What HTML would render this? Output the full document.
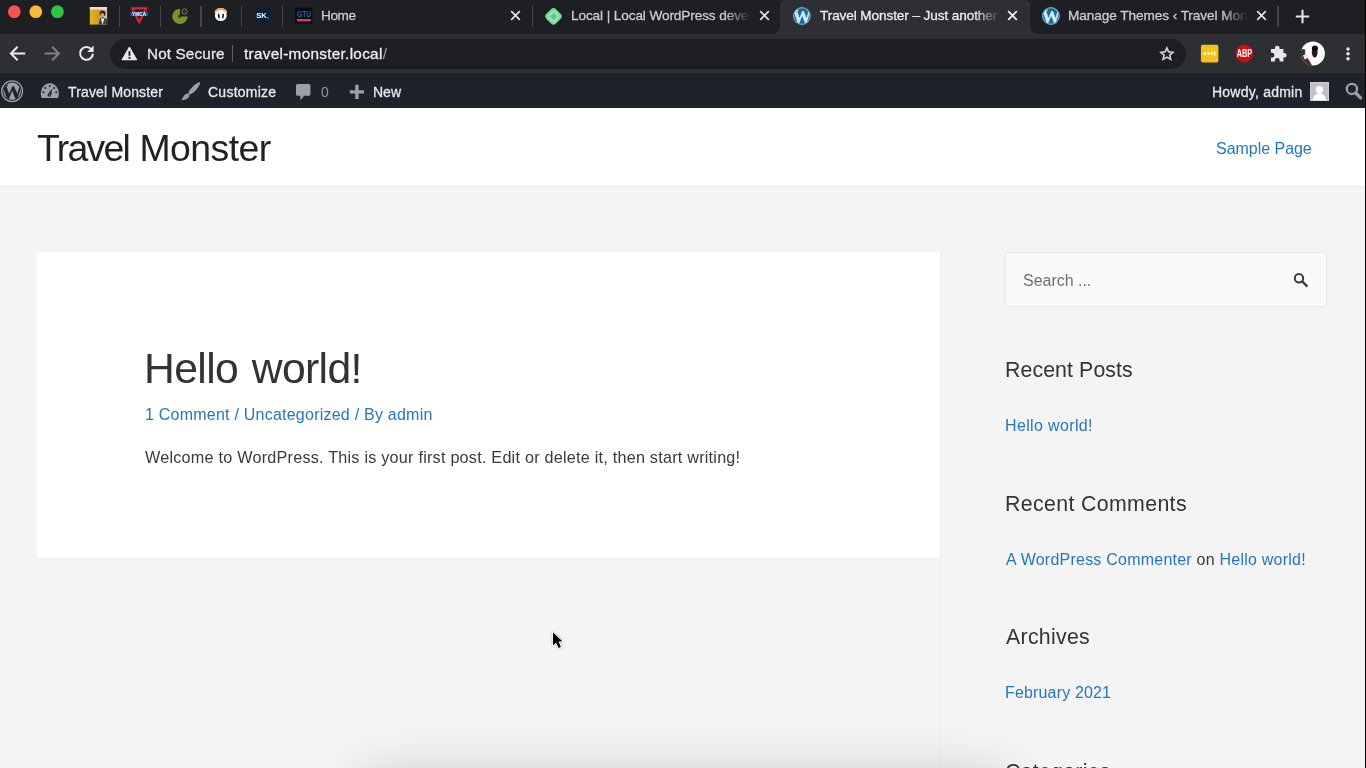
<!DOCTYPE html>
<html lang="en">
<head>
<meta charset="utf-8">
<title>Travel Monster – Just another WordPress site</title>
<style>
*{box-sizing:border-box;margin:0;padding:0}
html,body{width:1366px;height:768px;overflow:hidden;background:#f4f4f4}
body{font-family:"Liberation Sans",Arial,sans-serif;color:#3a3a3a;position:relative;-webkit-font-smoothing:antialiased}
a{text-decoration:none;color:#2477be}
.abs{position:absolute;white-space:nowrap}
/* promote text to its own layer so it is rendered with grayscale antialiasing */
.abs,.tabtxt,.t,.wt,.wl,#sitetitle,#menu1,#posttitle,#meta,#excerpt,#searchph{will-change:transform}

/* ---------- browser chrome ---------- */
#tabstrip{position:absolute;left:0;top:0;width:1366px;height:34px;background:#1e1f22}
#toolbar{position:absolute;left:0;top:34px;width:1366px;height:39px;background:#2e2f33}
#omnibox{position:absolute;left:110px;top:4.5px;width:1076px;height:30px;border-radius:15px;background:#1d1e21}
.tabtxt{position:absolute;top:6.5px;font-size:13.6px;line-height:17px;color:#c9ccd1;white-space:nowrap;overflow:hidden;-webkit-text-stroke:.3px #c9ccd1;-webkit-mask-image:linear-gradient(to right,#000 calc(100% - 26px),transparent 100%);mask-image:linear-gradient(to right,#000 calc(100% - 26px),transparent 100%)}
.tsep{position:absolute;top:5.7px;width:1.3px;height:21.3px;background:#444649}
.tclose{position:absolute;top:10px;width:11px;height:11px}
#activetab{position:absolute;left:780px;top:0;width:249.5px;height:34px;background:#2e2f33;border-radius:5px 5px 0 0}
#activetab:before,#activetab:after{content:"";position:absolute;bottom:0;width:8px;height:8px}
#activetab:before{left:-8px;background:radial-gradient(circle at 0 0,rgba(0,0,0,0) 7.5px,#2e2f33 8.2px)}
#activetab:after{right:-8px;background:radial-gradient(circle at 100% 0,rgba(0,0,0,0) 7.5px,#2e2f33 8.2px)}

/* ---------- wp admin bar ---------- */
#wpadminbar{position:absolute;left:0;top:73px;width:1366px;height:35px;background:#1e222a;color:#f0f0f1;font-size:14px}
#wpadminbar .t{position:absolute;top:11px;line-height:17px;white-space:nowrap;color:#e6e8eb;-webkit-text-stroke:.3px #e6e8eb}

/* ---------- site ---------- */
#masthead{position:absolute;left:0;top:108px;width:1366px;height:79px;background:#fff;border-bottom:1px solid #e9e9e9}
#sitetitle{position:absolute;left:37.3px;top:126px;letter-spacing:-1px;font-size:37.4px;line-height:44px;color:#222;white-space:nowrap}
#menu1{position:absolute;left:1215.6px;top:138.7px;letter-spacing:-.03px;font-size:16px;line-height:20px;white-space:nowrap}
#article{position:absolute;left:37px;top:252px;width:903px;height:305px;background:#fff}
#sideline{position:absolute;left:940px;top:251px;width:1px;height:517px;background:#ececec}
#posttitle{position:absolute;left:143.6px;top:343px;letter-spacing:-.64px;word-spacing:2.4px;font-size:42.7px;line-height:50px;color:#333;white-space:nowrap}
#meta{position:absolute;left:144.6px;top:405px;letter-spacing:.23px;font-size:16px;line-height:20px;white-space:nowrap;color:#2477be}
#excerpt{position:absolute;left:145px;top:447px;letter-spacing:.23px;font-size:16.2px;line-height:20px;white-space:nowrap;color:#3a3a3a}
#searchbox{position:absolute;left:1005px;top:252px;width:322px;height:55px;background:#fafafa;border:1px solid #e8e8e8;border-radius:2px}
#searchph{position:absolute;left:1022.6px;top:270.7px;letter-spacing:-.02px;font-size:16px;line-height:20px;color:#6f6f6f;white-space:nowrap}
.wt{position:absolute;left:1005px;font-size:21.3px;line-height:26px;color:#333;white-space:nowrap}
#dockshadow{position:absolute;left:372px;top:786px;width:624px;height:40px;border-radius:10px;box-shadow:0 0 48px 14px rgba(0,0,0,.17)}
.wl{position:absolute;left:1005px;font-size:16px;line-height:20px;white-space:nowrap}
</style>
</head>
<body>

<!-- ======= Chrome tab strip ======= -->
<div id="tabstrip">
  <div id="activetab"></div>

  <!-- traffic lights -->
  <svg class="abs" style="left:0;top:0" width="80" height="34" viewBox="0 0 80 34">
    <circle cx="14.3" cy="11.7" r="6.4" fill="#f4564e"/>
    <circle cx="35.8" cy="11.7" r="6.4" fill="#f7b93a"/>
    <circle cx="57.4" cy="11.7" r="6.4" fill="#2fc543"/>
  </svg>
  <!-- pinned tab favicons -->
  <svg class="abs" id="fav1" style="left:89px;top:6px" width="20" height="20" viewBox="0 0 20 20">
    <defs>
      <linearGradient id="gold" x1="0" y1="0" x2="1" y2="0"><stop offset="0" stop-color="#e3b62c"/><stop offset=".55" stop-color="#d19a17"/><stop offset="1" stop-color="#c9a24a"/></linearGradient>
      <clipPath id="f1c"><rect x=".6" y="1" width="17.6" height="17.8"/></clipPath>
    </defs>
    <g clip-path="url(#f1c)">
      <rect x=".6" y="1" width="17.6" height="17.8" fill="url(#gold)"/>
      <rect x=".6" y="1" width="17.6" height="2.6" fill="#f1dcd6"/>
      <rect x="11.4" y="3.6" width="7" height="15.4" fill="#d9c58e"/>
      <ellipse cx="13.6" cy="7.6" rx="2.9" ry="3" fill="#2a2320"/>
      <ellipse cx="13.3" cy="9" rx="1.9" ry="2.1" fill="#c99f86"/>
      <path d="M9.6 19 L11 12.2 L13.4 11.2 L18.4 13 L18.4 19 Z" fill="#39435a"/>
      <path d="M12 12.4 L13.6 18.8 L15.3 12.6 Z" fill="#f4f4f6"/>
    </g>
  </svg>
  <svg class="abs" id="fav2" style="left:129px;top:6px" width="21" height="20" viewBox="0 0 21 20">
    <path d="M1.4 1.3 H19 L10.2 18.4 Z M5 3.5 L10.2 13.6 L15.4 3.5 Z" fill="#df252d" fill-rule="evenodd"/>
    <rect x="1.4" y="5.75" width="17.6" height="4.3" fill="#2c4fa3"/>
    <text x="10.2" y="9.5" font-family="Liberation Sans, sans-serif" font-weight="700" font-size="4.6" text-anchor="middle" fill="#fff" letter-spacing=".2">YMCA</text>
  </svg>
  <svg class="abs" id="fav3" style="left:170px;top:6px" width="20" height="20" viewBox="0 0 20 20">
    <path d="M9.9 10.4 L9.9 2.7 A7.7 7.7 0 1 0 17.6 10.4 Z" fill="#7a9228"/>
    <circle cx="9.6" cy="10.4" r="1.3" fill="#22261a"/>
    <path d="M9.8 10.2 L13.6 6.6" stroke="#22261a" stroke-width=".9"/>
    <circle cx="14.6" cy="5.5" r="2.6" fill="#1e1f22" stroke="#7f8c58" stroke-width="1"/>
    <circle cx="14.6" cy="5.5" r=".8" fill="#3c4420"/>
  </svg>
  <svg class="abs" id="fav4" style="left:211px;top:6px" width="20" height="20" viewBox="0 0 20 20">
    <defs><clipPath id="pc"><circle cx="9.8" cy="9.6" r="7.9"/></clipPath></defs>
    <g clip-path="url(#pc)">
      <rect x="0" y="0" width="20" height="20" fill="#0e262a"/>
      <rect x="0" y="0" width="20" height="8" fill="#1a1312"/>
      <ellipse cx="9.8" cy="6" rx="6.4" ry="4.6" fill="#f0a878"/>
      <ellipse cx="9.8" cy="9.6" rx="5.9" ry="5.5" fill="#fbfbfb"/>
      <ellipse cx="7.8" cy="10" rx=".9" ry="2.6" fill="#1b1b1b" transform="rotate(-8 7.8 10)"/>
      <ellipse cx="12" cy="10" rx=".9" ry="2.6" fill="#1b1b1b" transform="rotate(8 12 10)"/>
    </g>
  </svg>
  <svg class="abs" id="fav5" style="left:252px;top:6px" width="20" height="20" viewBox="0 0 20 20">
    <circle cx="10.1" cy="9.3" r="8.7" fill="#0a2036"/>
    <text x="9.4" y="12.3" font-family="Liberation Sans, sans-serif" font-weight="700" font-size="7.6" text-anchor="middle" fill="#f5f7f8" letter-spacing="-.2">SK</text>
    <circle cx="15.9" cy="11.8" r=".9" fill="#1fb56a"/>
  </svg>
  <svg class="abs" id="fav6" style="left:294px;top:6px" width="20" height="20" viewBox="0 0 20 20">
    <rect x="1.3" y="1.5" width="17" height="16.2" fill="#0b0b0d"/>
    <text x="2.9" y="11.3" font-family="Liberation Sans, sans-serif" font-weight="700" font-size="8.6" textLength="14.2" lengthAdjust="spacingAndGlyphs" fill="#2d62ad">GTU</text>
    <rect x="3" y="13" width="13.8" height="2.4" fill="#e2356f"/>
  </svg>
  <!-- Local favicon -->
  <svg class="abs" id="fav7" style="left:543px;top:5.8px" width="21" height="21" viewBox="0 0 21 21">
    <rect x="3.7" y="3.6" width="13.6" height="13.6" rx="3.6" fill="#7cd99e" transform="rotate(45 10.5 10.4) scale(1 1)"/>
    <rect x="6.6" y="6.5" width="7.8" height="7.8" rx="1.4" fill="none" stroke="#a4ecc0" stroke-width="1.3" transform="rotate(45 10.5 10.4)"/>
    <rect x="8.2" y="8.1" width="4.6" height="4.6" fill="#5bc789" transform="rotate(45 10.5 10.4)"/>
  </svg>
  <!-- WordPress favicons -->
  <svg class="abs wpf" id="fav8" style="left:792px;top:6px" width="20" height="20" viewBox="0 0 20 20">
    <defs><clipPath id="wpc1"><circle cx="9.9" cy="10" r="7.9"/></clipPath></defs>
    <circle cx="9.9" cy="10" r="8.9" fill="#6aaed5"/>
    <circle cx="9.9" cy="10" r="7.7" fill="#1d6a94"/>
    <g clip-path="url(#wpc1)"><text x="9.9" y="16.6" font-family="Liberation Serif, serif" font-weight="700" font-size="19" text-anchor="middle" fill="#cfe9f8" stroke="#cfe9f8" stroke-width=".35">W</text></g>
  </svg>
  <svg class="abs wpf" id="fav9" style="left:1040.5px;top:6px" width="20" height="20" viewBox="0 0 20 20">
    <defs><clipPath id="wpc2"><circle cx="9.9" cy="10" r="7.9"/></clipPath></defs>
    <circle cx="9.9" cy="10" r="8.9" fill="#6aaed5"/>
    <circle cx="9.9" cy="10" r="7.7" fill="#1d6a94"/>
    <g clip-path="url(#wpc2)"><text x="9.9" y="16.6" font-family="Liberation Serif, serif" font-weight="700" font-size="19" text-anchor="middle" fill="#cfe9f8" stroke="#cfe9f8" stroke-width=".35">W</text></g>
  </svg>
  <!-- separators -->
  <div class="tsep" style="left:118.7px"></div><div class="tsep" style="left:159.5px"></div><div class="tsep" style="left:200.3px"></div>
  <div class="tsep" style="left:241.1px"></div><div class="tsep" style="left:282px"></div><div class="tsep" style="left:532px"></div><div class="tsep" style="left:1277.3px"></div>
  <!-- close buttons -->
  <svg class="tclose" style="left:510px" viewBox="0 0 11 11"><path d="M1.2 1.2 L9.8 9.8 M9.8 1.2 L1.2 9.8" stroke="#dfe1e5" stroke-width="1.7"/></svg>
  <svg class="tclose" style="left:758.5px" viewBox="0 0 11 11"><path d="M1.2 1.2 L9.8 9.8 M9.8 1.2 L1.2 9.8" stroke="#dfe1e5" stroke-width="1.7"/></svg>
  <svg class="tclose" style="left:1007.2px" viewBox="0 0 11 11"><path d="M1.2 1.2 L9.8 9.8 M9.8 1.2 L1.2 9.8" stroke="#f1f3f4" stroke-width="1.7"/></svg>
  <svg class="tclose" style="left:1255.5px" viewBox="0 0 11 11"><path d="M1.2 1.2 L9.8 9.8 M9.8 1.2 L1.2 9.8" stroke="#dfe1e5" stroke-width="1.7"/></svg>
  <!-- new tab -->
  <svg class="abs" style="left:1294.5px;top:8.5px" width="15" height="15" viewBox="0 0 15 15"><path d="M7.5 .8 V14.2 M.8 7.5 H14.2" stroke="#e3e5e8" stroke-width="2.1"/></svg>
  <div class="tabtxt" id="tab1" style="left:321px;letter-spacing:-.4px;width:180px">Home</div>
  <div class="tabtxt" id="tab2" style="left:571px;letter-spacing:-.1px;width:180px">Local | Local WordPress development</div>
  <div class="tabtxt" id="tab3" style="left:820px;letter-spacing:-.1px;width:180px;color:#eceef1;-webkit-text-stroke-color:#eceef1">Travel Monster – Just another WordPress site</div>
  <div class="tabtxt" id="tab4" style="left:1068px;letter-spacing:-.06px;width:180px">Manage Themes ‹ Travel Monster — WordPress</div>
</div>

<!-- ======= Chrome toolbar ======= -->
<div id="toolbar">
  <div id="omnibox"></div>

  <!-- back / forward / reload -->
  <svg class="abs" style="left:8px;top:10px" width="20" height="20" viewBox="0 0 20 20"><path d="M17.2 9.5 H3.6 M9.6 2.8 L2.9 9.5 L9.6 16.2" fill="none" stroke="#e8eaed" stroke-width="2"/></svg>
  <svg class="abs" style="left:42px;top:10px" width="20" height="20" viewBox="0 0 20 20"><path d="M2.6 9.5 H16.2 M10.2 2.8 L16.9 9.5 L10.2 16.2" fill="none" stroke="#7d8085" stroke-width="2"/></svg>
  <svg class="abs" style="left:76px;top:9px" width="22" height="22" viewBox="0 0 22 22"><path d="M15.3 6.1 A6.4 6.4 0 1 0 16.9 10.6" fill="none" stroke="#e8eaed" stroke-width="2.1"/><path d="M17.6 2.6 V9 H11.2 Z" fill="#e8eaed"/></svg>
  <!-- not-secure warning -->
  <svg class="abs" style="left:120px;top:11px" width="19" height="17" viewBox="0 0 19 17"><path d="M9.4 2.4 L16.6 14.7 H2.2 Z" fill="#e8eaed" stroke="#e8eaed" stroke-width="1.2" stroke-linejoin="round"/><rect x="8.5" y="6.2" width="1.9" height="4.6" fill="#1d1e21"/><rect x="8.5" y="11.9" width="1.9" height="1.9" fill="#1d1e21"/></svg>
  <div class="abs" style="left:231.8px;top:11px;width:1.2px;height:17px;background:#5c5f64"></div>
  <!-- bookmark star -->
  <svg class="abs" style="left:1158.8px;top:11.6px" width="15.6" height="15.6" viewBox="0 0 19 19"><path d="M9.6 2.3 L11.75 7.15 L17 7.65 L13.05 11.15 L14.2 16.3 L9.6 13.6 L5 16.3 L6.15 11.15 L2.2 7.65 L7.45 7.15 Z" fill="none" stroke="#cfd2d6" stroke-width="2" stroke-linejoin="miter"/></svg>
  <!-- extensions -->
  <svg class="abs" style="left:1200px;top:10px" width="20" height="19" viewBox="0 0 20 19">
    <rect x=".9" y=".7" width="17.5" height="17.8" rx="2" fill="#f3c31d"/>
    <circle cx="4.7" cy="9.6" r="1.25" fill="#fff"/><circle cx="8.3" cy="9.6" r="1.25" fill="#fff"/><circle cx="11.9" cy="9.6" r="1.25" fill="#fff"/><rect x="14.2" y="7.4" width="1.1" height="4.4" fill="#fff"/>
  </svg>
  <svg class="abs" style="left:1234px;top:9px" width="21" height="21" viewBox="0 0 21 21">
    <circle cx="10.4" cy="10.5" r="8.9" fill="#c90f12"/>
    <text x="2.7" y="14.2" font-family="Liberation Sans, sans-serif" font-weight="700" font-size="10.4" textLength="15.4" lengthAdjust="spacingAndGlyphs" fill="#fff">ABP</text>
  </svg>
  <svg class="abs" id="puzzle" style="left:1269px;top:10px" width="19" height="19" viewBox="0 0 19 19">
    <path d="M2 5 H5.9 V4 A2.35 2.35 0 0 1 10.6 4 V5 H14.4 V8.9 H15.3 A2.3 2.3 0 0 1 15.3 13.5 H14.4 V17.4 H10.7 V16.3 A2.4 2.4 0 0 0 5.9 16.3 V17.4 H2 V13.6 H3 A2.4 2.4 0 0 0 3 8.8 H2 Z" fill="#e6e8eb"/>
  </svg>
  <svg class="abs" id="avatar" style="left:1300px;top:7px" width="26" height="26" viewBox="0 0 26 26">
    <defs><clipPath id="avc"><circle cx="12.9" cy="12.6" r="12"/></clipPath></defs>
    <g clip-path="url(#avc)">
      <rect width="26" height="26" fill="#fdfbfc"/>
      <path d="M0 8 L3.6 8.2 L5.4 13 L9.2 19.5 L13 26 L0 26 Z" fill="#4a2d33"/>
      <path d="M.4 8.6 H5.2 V11.8 H.4 Z" fill="#2c3346"/>
      <path d="M3 14.2 L6.4 13 L8 17 L4.6 18.6 Z" fill="#e9e6ea"/>
      <ellipse cx="14.7" cy="10.9" rx="2.9" ry="5.7" fill="#2b1a1d"/>
      <ellipse cx="14.9" cy="7.2" rx="3" ry="2.7" fill="#0d0c10"/>
    </g>
  </svg>
  <svg class="abs" style="left:1344px;top:11px" width="8" height="18" viewBox="0 0 8 18"><circle cx="4" cy="3.9" r="1.75" fill="#e6e8eb"/><circle cx="4" cy="8.8" r="1.75" fill="#e6e8eb"/><circle cx="4" cy="13.7" r="1.75" fill="#e6e8eb"/></svg>
  <div class="abs" id="notsecure" style="left:146.7px;top:10.5px;letter-spacing:.12px;font-size:15.3px;line-height:18px;color:#e4e6e9;-webkit-text-stroke:.3px #e4e6e9">Not Secure</div>
  <div class="abs" id="url" style="left:243.5px;top:10.5px;letter-spacing:.3px;font-size:15.3px;line-height:18px;color:#eceef1;-webkit-text-stroke:.3px #eceef1">travel-monster.local<span style="color:#9aa0a6;-webkit-text-stroke:0">/</span></div>
</div>

<!-- ======= WP admin bar ======= -->
<div id="wpadminbar">

  <!-- WP logo -->
  <svg class="abs" id="wplogo" style="left:0;top:6px" width="25" height="25" viewBox="0 0 25 25">
    <defs><clipPath id="wpc3"><circle cx="12.1" cy="12.2" r="8.7"/></clipPath></defs>
    <circle cx="12.1" cy="12.2" r="10.4" fill="none" stroke="#9ba1a8" stroke-width="1.3"/>
    <circle cx="12.1" cy="12.2" r="8.7" fill="#9ba1a8"/>
    <g clip-path="url(#wpc3)"><text x="12.1" y="19.8" font-family="Liberation Serif, serif" font-weight="700" font-size="22" text-anchor="middle" fill="#1e222a" stroke="#1e222a" stroke-width=".3">W</text></g>
  </svg>
  <!-- dashboard gauge -->
  <svg class="abs" id="dash" style="left:40px;top:9px" width="20" height="17" viewBox="0 0 20 17">
    <path d="M1.7 15.9 A9 10.2 0 1 1 17.9 15.9 Z" fill="#9ba1a8"/>
    <circle cx="3.3" cy="10.3" r="1" fill="#1e222a"/><circle cx="5.4" cy="6.1" r="1" fill="#1e222a"/><circle cx="9.8" cy="4" r="1" fill="#1e222a"/><circle cx="14.1" cy="6.1" r="1" fill="#1e222a"/><circle cx="16.2" cy="10.3" r="1" fill="#1e222a"/>
    <path d="M12.3 6.6 L11.2 13 A1.7 1.7 0 1 1 8.2 11.8 Z" fill="#1e222a"/>
    <circle cx="9.7" cy="12.9" r=".7" fill="#9ba1a8"/>
  </svg>
  <!-- customize brush -->
  <svg class="abs" id="brush" style="left:180px;top:8px" width="22" height="21" viewBox="0 0 22 21">
    <path d="M19.6 1.3 C20.6 1.5 20.1 3.2 18.6 5.6 C16.6 8.8 13.4 12.2 10.6 13.3 C9 13.6 8.2 12.4 8.6 11.2 C9.8 8.2 16.6 1.2 19.6 1.3 Z" fill="#9ba1a8"/>
    <path d="M7.6 12.6 C8.8 12.8 9.6 13.8 9.4 14.8 C8.8 17.4 5 19.4 1.2 19.2 C3.2 17.6 3.6 13 7.6 12.6 Z" fill="#9ba1a8"/>
  </svg>
  <!-- comments -->
  <svg class="abs" id="bubble" style="left:295px;top:10px" width="17" height="18" viewBox="0 0 17 18">
    <path d="M2.6 .9 H13.8 A1.6 1.6 0 0 1 15.4 2.5 V11.2 A1.6 1.6 0 0 1 13.8 12.8 H9.2 L5.4 17.2 V12.8 H2.6 A1.6 1.6 0 0 1 1 11.2 V2.5 A1.6 1.6 0 0 1 2.6 .9 Z" fill="#9ba1a8"/>
  </svg>
  <!-- new (+) -->
  <svg class="abs" id="abplus" style="left:349px;top:11px" width="16" height="16" viewBox="0 0 16 16"><path d="M7.9 .8 V15 M.8 7.9 H15" stroke="#9ba1a8" stroke-width="3.4"/></svg>
  <!-- user avatar (mystery person) -->
  <svg class="abs" id="mm" style="left:1310px;top:8.8px" width="19" height="19" viewBox="0 0 19 19">
    <defs><clipPath id="mmc"><rect x=".6" y=".6" width="17.8" height="17.8"/></clipPath></defs>
    <rect x="0" y="0" width="19" height="19" fill="#cfd0d2"/>
    <rect x=".9" y=".9" width="17.2" height="17.2" fill="#bfc0c3"/>
    <g clip-path="url(#mmc)"><circle cx="9.4" cy="7.6" r="3.7" fill="#fff"/><path d="M2.4 18.5 C3.4 13.2 6.4 11.3 9.4 11.3 C12.4 11.3 15.4 13.2 16.4 18.5 Z" fill="#fff"/></g>
  </svg>
  <!-- search -->
  <svg class="abs" id="absearch" style="left:1343px;top:8px" width="20" height="20" viewBox="0 0 20 20"><circle cx="8.9" cy="7.9" r="5.1" fill="none" stroke="#9ba1a8" stroke-width="2.3"/><path d="M12.7 12 L17.6 16.8" stroke="#9ba1a8" stroke-width="3.2" stroke-linecap="round"/></svg>
  <div class="t" id="ab1" style="left:68px;letter-spacing:.16px">Travel Monster</div>
  <div class="t" id="ab2" style="left:207.5px;letter-spacing:.25px">Customize</div>
  <div class="t" id="ab3" style="left:321px;color:#8f949b;-webkit-text-stroke:0">0</div>
  <div class="t" id="ab4" style="left:372.8px">New</div>
  <div class="t" id="ab5" style="left:1212px;letter-spacing:.23px">Howdy, admin</div>
</div>

<!-- ======= Site header ======= -->
<div id="masthead"></div>
<div id="sitetitle"><span style="letter-spacing:-1.75px">Travel</span><span style="letter-spacing:.1px"> </span><span style="letter-spacing:-.56px">Monster</span></div>
<a id="menu1" href="#">Sample Page</a>

<!-- ======= Main content ======= -->
<div id="article"></div>
<div id="sideline"></div>
<div id="posttitle">Hello world!</div>
<div id="meta"><a href="#">1 Comment</a> / <a href="#">Uncategorized</a> / By <a href="#">admin</a></div>
<div id="excerpt">Welcome to WordPress. This is your first post. Edit or delete it, then start writing!</div>

<!-- ======= Sidebar ======= -->
<div id="searchbox"></div>
<div id="searchph">Search ...</div>
<div class="wt" id="w1" style="top:357px;letter-spacing:.1px">Recent Posts</div>
<a class="wl" id="l1" href="#" style="top:416px;letter-spacing:.36px">Hello world!</a>
<div class="wt" id="w2" style="top:490.7px;letter-spacing:.37px">Recent Comments</div>
<div class="wl" id="l2" style="top:550px;left:1005.6px;letter-spacing:.23px"><a href="#">A WordPress Commenter</a> on <a href="#">Hello world!</a></div>
<div class="wt" id="w3" style="top:624.4px;left:1005.5px;letter-spacing:.3px">Archives</div>
<a class="wl" id="l3" href="#" style="top:682.7px;letter-spacing:.16px">February 2021</a>
<div class="wt" id="w4" style="top:758.8px;letter-spacing:.28px">Categories</div>

<!-- sidebar search icon -->
<svg class="abs" id="sbsearch" style="left:1292px;top:271px" width="18" height="18" viewBox="0 0 18 18"><circle cx="7" cy="7.2" r="4.2" fill="none" stroke="#3a3a3a" stroke-width="2"/><path d="M10.2 10.4 L15.4 15.6" stroke="#3a3a3a" stroke-width="2.3"/></svg>

<!-- dock shadow at bottom -->
<div id="dockshadow"></div>

<!-- mouse cursor -->
<svg class="abs" id="cursor" style="left:548px;top:628px;filter:drop-shadow(0 .8px 1px rgba(0,0,0,.3))" width="20" height="24" viewBox="0 0 20 24">
  <path d="M5 4.4 V17.2 L8.1 14.5 L10.6 20.1 L12.9 19.1 L10.5 13.6 L14.4 13.2 Z" fill="#000" stroke="#fff" stroke-width="1.4" stroke-linejoin="round" paint-order="stroke"/>
</svg>

<!-- screen edge -->
<div class="abs" style="left:1365px;top:0;width:1px;height:768px;background:#000"></div>

</body>
</html>
